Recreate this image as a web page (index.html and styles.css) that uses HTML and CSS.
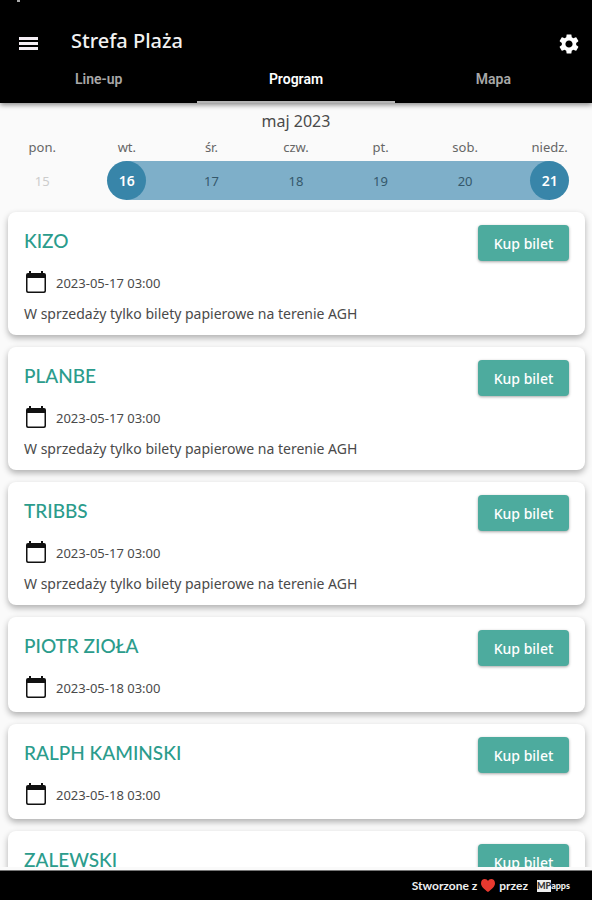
FILE: index.html
```html
<!DOCTYPE html>
<html lang="pl">
<head>
    <meta charset="UTF-8">
    <meta name="viewport" content="width=device-width, initial-scale=1.0">
    <title>Strefa Plaża</title>
    <link rel="stylesheet" href="styles.css">
</head>
<body>
    <header class="app-bar">
        <div class="toolbar">
            <button class="icon-btn" aria-label="Menu">
                <svg width="19" height="14" viewBox="0 0 19 14" fill="#f4eef4">
                    <rect width="19" height="3"></rect>
                    <rect y="5" width="19" height="3"></rect>
                    <rect y="10" width="19" height="3"></rect>
                </svg>
            </button>
            <h1 class="title">Strefa Plaża</h1>
            <button class="icon-btn" aria-label="Ustawienia">
                <svg width="24" height="24" viewBox="0 0 24 24" fill="#fff">
                    <path d="M19.14 12.94c.04-.3.06-.61.06-.94 0-.32-.02-.64-.07-.94l2.03-1.58c.18-.14.23-.41.12-.61l-1.92-3.32c-.12-.22-.37-.29-.59-.22l-2.39.96c-.5-.38-1.03-.7-1.62-.94l-.36-2.54c-.04-.24-.24-.41-.48-.41h-3.84c-.24 0-.43.17-.47.41l-.36 2.54c-.59.24-1.13.57-1.62.94l-2.39-.96c-.22-.08-.47 0-.59.22L2.74 8.87c-.12.21-.08.47.12.61l2.03 1.58c-.05.3-.09.63-.09.94s.02.64.07.94l-2.03 1.58c-.18.14-.23.41-.12.61l1.92 3.32c.12.22.37.29.59.22l2.39-.96c.5.38 1.03.7 1.62.94l.36 2.54c.05.24.24.41.48.41h3.84c.24 0 .44-.17.47-.41l.36-2.54c.59-.24 1.13-.56 1.62-.94l2.39.96c.22.08.47 0 .59-.22l1.92-3.32c.12-.22.07-.47-.12-.61l-2.01-1.58zM12 15.6c-1.98 0-3.6-1.62-3.6-3.6s1.62-3.6 3.6-3.6 3.6 1.62 3.6 3.6-1.62 3.6-3.6 3.6z"></path>
                </svg>
            </button>
        </div>
        <nav class="tabs">
            <a href="#lineup">Line-up</a>
            <a href="#program" class="active">Program</a>
            <a href="#mapa">Mapa</a>
        </nav>
    </header>

    <main class="content">
        <table class="calendar">
            <caption>maj 2023</caption>
            <thead>
                <tr><th>pon.</th><th>wt.</th><th>śr.</th><th>czw.</th><th>pt.</th><th>sob.</th><th>niedz.</th></tr>
            </thead>
            <tbody>
                <tr>
                    <td class="disabled">15</td>
                    <td class="range-start"><span class="day">16</span></td>
                    <td class="in-range">17</td>
                    <td class="in-range">18</td>
                    <td class="in-range">19</td>
                    <td class="in-range">20</td>
                    <td class="range-end"><span class="day">21</span></td>
                </tr>
            </tbody>
        </table>

        <!-- calendar icon shared by all cards -->
        <svg class="symbols" aria-hidden="true">
            <symbol id="cal" viewBox="0 0 22 24">
                <path d="M4 0h2v2h10V0h2v2h1a2 2 0 0 1 2 2v16a2 2 0 0 1-2 2H3a2 2 0 0 1-2-2V4a2 2 0 0 1 2-2h1zM2.500 7v12.500a1 1 0 0 0 1 1h15a1 1 0 0 0 1-1V7z"></path>
            </symbol>
        </svg>

        <div class="list">
            <article class="card">
                <div class="card-top">
                    <h2>KIZO</h2>
                    <button class="buy">Kup bilet</button>
                </div>
                <div class="date"><svg class="cal"><use href="#cal"></use></svg>2023-05-17 03:00</div>
                <p class="note">W sprzedaży tylko bilety papierowe na terenie AGH</p>
            </article>
            <article class="card">
                <div class="card-top">
                    <h2>PLANBE</h2>
                    <button class="buy">Kup bilet</button>
                </div>
                <div class="date"><svg class="cal"><use href="#cal"></use></svg>2023-05-17 03:00</div>
                <p class="note">W sprzedaży tylko bilety papierowe na terenie AGH</p>
            </article>
            <article class="card">
                <div class="card-top">
                    <h2>TRIBBS</h2>
                    <button class="buy">Kup bilet</button>
                </div>
                <div class="date"><svg class="cal"><use href="#cal"></use></svg>2023-05-17 03:00</div>
                <p class="note">W sprzedaży tylko bilety papierowe na terenie AGH</p>
            </article>
            <article class="card">
                <div class="card-top">
                    <h2>PIOTR ZIOŁA</h2>
                    <button class="buy">Kup bilet</button>
                </div>
                <div class="date"><svg class="cal"><use href="#cal"></use></svg>2023-05-18 03:00</div>
            </article>
            <article class="card">
                <div class="card-top">
                    <h2>RALPH KAMINSKI</h2>
                    <button class="buy">Kup bilet</button>
                </div>
                <div class="date"><svg class="cal"><use href="#cal"></use></svg>2023-05-18 03:00</div>
            </article>
            <article class="card">
                <div class="card-top">
                    <h2>ZALEWSKI</h2>
                    <button class="buy">Kup bilet</button>
                </div>
            </article>
        </div>
    </main>

    <footer class="footer">
        <span>Stworzone z</span>
        <svg width="14" height="13" viewBox="0 0 14 13" fill="#e8392f">
            <path d="M7 13C3 10 0 7.500 0 4.200 0 1.500 1.700 0 3.800 0 5.200 0 6.400.8 7 2 7.600.8 8.800 0 10.200 0 12.300 0 14 1.500 14 4.200 14 7.500 11 10 7 13z"></path>
        </svg>
        <span>przez</span>
        <a href="#apps" class="brand"><span class="brand-mark">MP</span>apps</a>
    </footer>
</body>
</html>
```
FILE: styles.css
```css
* {
    margin: 0;
    padding: 0;
    box-sizing: border-box;
}

body {
    display: flex;
    flex-direction: column;
    height: 100vh;
    background-color: #fafafa;
    color: #4a4a4a;
    font-family: "Noto Sans", sans-serif;
    font-size: 13px;
}

button {
    border: none;
    font-family: inherit;
    cursor: pointer;
}

a {
    color: inherit;
    text-decoration: none;
}

.app-bar {
    position: relative;
    z-index: 1;
    flex: none;
    padding-top: 24px;
    background-color: #000;
    color: #f2f2f2;
    box-shadow: 0 2px 5px rgba(0, 0, 0, 0.45);
}

/* edge of the system status bar */
.app-bar::before {
    content: "";
    position: absolute;
    top: 0;
    left: 17px;
    width: 3px;
    height: 2px;
    background-color: #aaa;
}

.toolbar {
    display: flex;
    align-items: center;
    height: 40px;
    padding: 0 11px 0 16px;
}

.icon-btn {
    display: flex;
    align-items: center;
    justify-content: center;
    width: 24px;
    height: 40px;
    background: none;
}

.title {
    flex: 1;
    padding: 0 0 6px 31px;
    font-size: 20px;
    line-height: 24px;
    font-weight: 500;
}

.tabs {
    display: flex;
    height: 39px;
    font-family: Roboto, sans-serif;
    font-size: 14px;
    font-weight: 600;
    line-height: 30px;
    text-align: center;
    color: #a8a8a8;
}

.tabs a {
    flex: 1;
    border-bottom: 2px solid transparent;
}

.tabs .active {
    border-color: #b4b4b4;
    color: #fff;
}

.content {
    flex: 1;
    min-height: 0;
    margin-bottom: 3px;
    overflow: hidden;
}

.calendar {
    width: 100%;
    table-layout: fixed;
    border-collapse: collapse;
    text-align: center;
}

.calendar caption {
    padding-top: 6px;
    font-size: 16px;
    line-height: 24px;
}

.calendar th {
    height: 28px;
    font-weight: 400;
    color: #666;
}

.calendar td {
    height: 39px;
}

.calendar .disabled {
    color: #ccc;
}

.in-range {
    background-color: #7eafc9;
    color: #35586b;
}

.range-start {
    background: linear-gradient(to right, transparent 50%, #7eafc9 50%);
}

.range-end {
    background: linear-gradient(to left, transparent 50%, #7eafc9 50%);
}

.day {
    display: block;
    width: 39px;
    margin: 0 auto;
    border-radius: 50%;
    background-color: #3885a9;
    color: #fff;
    font-size: 14px;
    line-height: 39px;
    font-weight: 600;
}

.symbols {
    display: none;
}

.list {
    display: flex;
    flex-direction: column;
    gap: 12px;
    padding: 12px 7px 12px 8px;
}

.card {
    padding: 13px 16px 12px;
    border-radius: 8px;
    background-color: #fff;
    box-shadow: 0 3px 6px rgba(0, 0, 0, 0.3);
}

.card-top {
    display: flex;
    align-items: flex-start;
    justify-content: space-between;
    height: 36px;
}

.card h2 {
    color: #2b9c8c;
    font-family: Lato, sans-serif;
    font-size: 19px;
    line-height: 32px;
    font-weight: 500;
}

.buy {
    width: 91px;
    height: 36px;
    border-radius: 4px;
    background-color: #4dab9e;
    color: #fff;
    font-size: 14px;
    font-weight: 500;
    box-shadow: 0 1px 3px rgba(0, 0, 0, 0.35);
}

.date {
    display: flex;
    align-items: center;
    gap: 8px;
    padding-top: 10px;
    line-height: 24px;
}

.cal {
    width: 24px;
    height: 24px;
    fill: #111;
}

.note {
    padding-top: 10px;
    font-size: 14px;
    line-height: 18px;
}

.footer {
    display: flex;
    flex: none;
    align-items: center;
    justify-content: flex-end;
    gap: 4px;
    height: 30px;
    padding-right: 22px;
    border-top: 1px solid #777;
    background-color: #000;
    color: #eee;
    font-family: Lato, sans-serif;
    font-size: 12px;
    font-weight: 700;
}

.brand {
    display: flex;
    align-items: center;
    margin-left: 5px;
    font-size: 9px;
    font-weight: 900;
    line-height: 12px;
}

.brand-mark {
    background-color: #eee;
    color: #333;
}
```
